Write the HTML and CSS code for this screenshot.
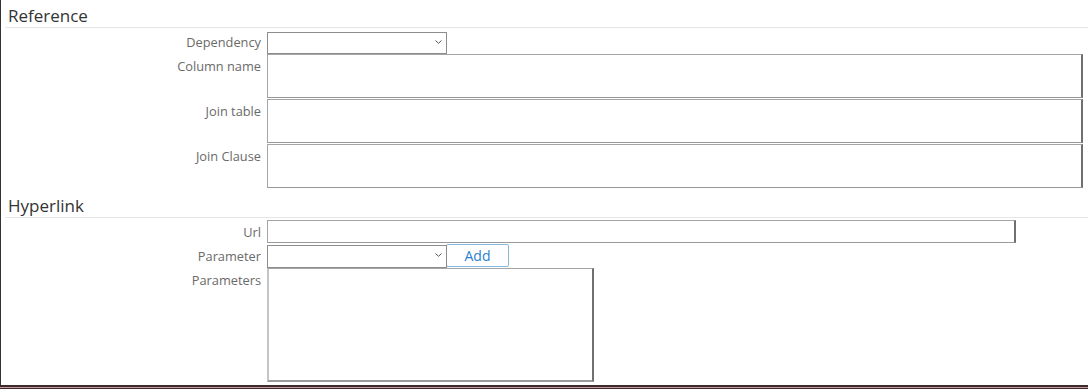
FILE: index.html
```html
<!DOCTYPE html>
<html lang="en">
<head>
  <meta charset="UTF-8">
  <title>Column settings</title>
  <link rel="stylesheet" href="styles.css">
</head>
<body>
  <div class="page">
    <section class="group">
      <h2 class="group-title">Reference</h2>

      <div class="field">
        <label class="field-label middle">Dependency</label>
        <div class="select-wrap">
          <select class="select"></select>
          <svg class="chevron" width="7" height="4" viewBox="0 0 7 4"><path d="M0.5 0.5 L3.5 3.3 L6.5 0.5" fill="none" stroke="#555" stroke-width="1"/></svg>
        </div>
      </div>

      <div class="field">
        <label class="field-label">Column name</label>
        <textarea class="textarea wide"></textarea>
      </div>

      <div class="field">
        <label class="field-label">Join table</label>
        <textarea class="textarea wide"></textarea>
      </div>

      <div class="field">
        <label class="field-label">Join Clause</label>
        <textarea class="textarea wide"></textarea>
      </div>
    </section>

    <section class="group second">
      <h2 class="group-title">Hyperlink</h2>

      <div class="field">
        <label class="field-label middle">Url</label>
        <input class="input url" type="text">
      </div>

      <div class="field">
        <label class="field-label middle">Parameter</label>
        <div class="inline">
          <div class="select-wrap tall">
            <select class="select"></select>
            <svg class="chevron" width="7" height="4" viewBox="0 0 7 4"><path d="M0.5 0.5 L3.5 3.3 L6.5 0.5" fill="none" stroke="#555" stroke-width="1"/></svg>
          </div>
          <button class="add-btn" type="button">Add</button>
        </div>
      </div>

      <div class="field">
        <label class="field-label">Parameters</label>
        <textarea class="textarea params"></textarea>
      </div>
    </section>
  </div>
  <div class="bottom-rule"></div>
</body>
</html>
```

FILE: styles.css
```css
body {
  margin: 0;
  padding: 0;
  background: #fff;
  font-family: "Open Sans", "Noto Sans", Arial, sans-serif;
  color: #333;
}

.page {
  height: 385px;
  box-sizing: border-box;
  border-left: 1px solid #333;
  overflow: hidden;
}

.group-title {
  margin: 0 0 0 4px;
  padding: 5px 0 0 3px;
  font-size: 17px;
  line-height: 22px;
  font-weight: normal;
  color: #333;
  border-bottom: 1px solid #e6e6e6;
}

.group.second {
  margin-top: 2px;
}

.group .field:first-of-type {
  margin-top: 3px;
}

.group.second .field:first-of-type {
  margin-top: 2px;
}

.field {
  display: grid;
  grid-template-columns: 260px auto;
  column-gap: 6px;
  justify-content: start;
  margin-top: 1px;
}

.field-label {
  text-align: right;
  font-size: 12.8px;
  line-height: 18px;
  padding-top: 3px;
  color: #6a6a6a;
}

.field-label.middle {
  padding-top: 0;
  align-self: center;
}

.select-wrap {
  position: relative;
  width: 180px;
  height: 22px;
}

.select-wrap.tall {
  height: 23px;
}

.select {
  appearance: none;
  -webkit-appearance: none;
  width: 100%;
  height: 100%;
  margin: 0;
  box-sizing: border-box;
  border: 1px solid #8d8d8d;
  border-radius: 0;
  background: #fff;
  font-family: inherit;
  font-size: 13px;
}

.chevron {
  position: absolute;
  right: 5px;
  top: 9px;
}

.textarea,
.input {
  display: block;
  margin: 0;
  box-sizing: border-box;
  border-top: 1px solid #a5a5a5;
  border-left: 1px solid #a5a5a5;
  border-bottom: 1px solid #999;
  border-right: 2px solid #707070;
  border-radius: 0;
  background: #fff;
  font-family: inherit;
  font-size: 13px;
  resize: none;
  padding: 2px;
}

.textarea.wide {
  width: 816px;
  height: 44px;
}

.input.url {
  width: 749px;
  height: 23px;
}

.textarea.params {
  width: 327px;
  height: 114px;
  border-left: 2px solid #c4c4c4;
  border-bottom: 2px solid #9a9a9a;
}

.inline {
  display: flex;
}

.add-btn {
  margin-left: -1px;
  width: 63px;
  height: 23px;
  padding: 0;
  border: 1px solid #86b7dd;
  border-radius: 2px;
  background: #fff;
  color: #2a7fcf;
  font-family: inherit;
  font-size: 14px;
  line-height: 18px;
  cursor: pointer;
}

.bottom-rule {
  height: 1px;
  border-top: 2px solid #3b2a2c;
  border-bottom: 1px solid #3b2a2c;
  background: #c99a9c;
}
```
